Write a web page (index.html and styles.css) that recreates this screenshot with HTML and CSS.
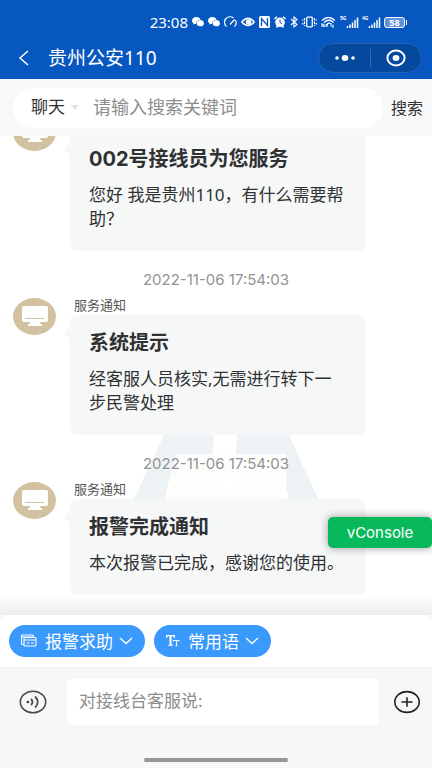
FILE: index.html
```html
<!DOCTYPE html>
<html lang="zh-CN">
<head>
<meta charset="utf-8">
<meta name="viewport" content="width=device-width, initial-scale=1">
<title>贵州公安110</title>
<link rel="stylesheet" href="styles.css">
</head>
<body>
<svg class="defs" aria-hidden="true">
  <symbol id="wechat" viewBox="0 0 12 10">
    <path fill="#fff" d="M4.3 0C1.9 0 0 1.6 0 3.500c0 1.100.6 2 1.500 2.700L1.200 7.400l1.500-.7c.4.1.9.2 1.400.2C3.900 4.400 5.800 2.700 8.500 2.700 8.100 1.100 6.400 0 4.300 0z"/>
    <path fill="#fff" d="M8.300 3.100c-2.100 0-3.700 1.400-3.700 3.100s1.600 3.100 3.700 3.100c.4 0 .8 0 1.200-.2l1.300.7-.3-1.200c.9-.5 1.500-1.400 1.500-2.400 0-1.700-1.600-3.100-3.700-3.100z"/>
  </symbol>
  <symbol id="monitor" viewBox="0 0 26 22">
    <path fill="#fff" d="M2 0h22q2 0 2 2v12q0 2-2 2h-6q0 2 2 2.500V20H6v-1.500q2-.5 2-2.500H2q-2 0-2-2V2q0-2 2-2z"/>
    <path d="M3 12.500h19" stroke="#d2c2a1"/>
  </symbol>
  <symbol id="chevron" viewBox="0 0 14 8">
    <path d="M1 1l6 5.500L13 1" fill="none" stroke="#fff" stroke-width="1.400"/>
  </symbol>
  <symbol id="bars" viewBox="0 0 19 12">
    <path d="M7.500 12v-2M10 12V8.500M12.500 12V6.500M15 12V4M17.500 12V1.500" stroke="#fff" stroke-width="1.500"/>
  </symbol>
</svg>
<div class="app">
  <header class="top">
    <div class="status">
      <span class="clock">23:08</span>
      <svg class="w12" viewBox="0 0 12 10"><use href="#wechat"/></svg>
      <svg class="w12" viewBox="0 0 12 10"><use href="#wechat"/></svg>
      <svg class="w13" viewBox="0 0 13 12"><path d="M2.500 10.500A5.300 5.300 0 0 1 9.500 2M11.300 4a5.300 5.300 0 0 1-.8 6.500M6 8.500l4.500-5" fill="none" stroke="#fff" stroke-width="1.200"/></svg>
      <svg class="w14" viewBox="0 0 14 12"><path d="M.7 6Q7-1.500 13.300 6 7 13 .7 6z" fill="none" stroke="#fff" stroke-width="1.400"/><circle cx="7.500" cy="6" r="2.800" fill="#fff"/></svg>
      <svg class="w11" viewBox="0 0 11 12"><rect width="11" height="12" rx="1.500" fill="#fff"/><path d="M2.500 10V2.500L8.500 9.500V2" fill="none" stroke="#0757c1" stroke-width="1.300"/></svg>
      <svg class="w12" viewBox="0 0 12 12"><circle cx="6" cy="6.300" r="4.800" fill="#fff"/><path d="M.5 3L3 .8M11.500 3L9 .8M2.500 11.500l1-1.500M9.500 11.500l-1-1.500" stroke="#fff" stroke-width="1.500"/><path d="M6 3.500v3l2 1.200" fill="none" stroke="#0757c1"/></svg>
      <svg class="w8" viewBox="0 0 8 12"><path d="M1 3l6 5.500L4 11V1l3 2.500L1 9" fill="none" stroke="#fff" stroke-width="1.100"/></svg>
      <svg class="w15" viewBox="0 0 15 12"><rect x="4.700" y="1.200" width="5.600" height="9.600" rx=".8" fill="none" stroke="#fff" stroke-width="1.300"/><path d="M2.500 2v2.500m0 1v2.500m0 1v1M.7 3.500v1m0 2.500v1.500M12.500 2v2.500m0 1v2.500m0 1v1M14.300 3.500v1m0 2.500v1.500" stroke="#fff" stroke-width="1.200"/></svg>
      <svg class="w15" viewBox="0 0 15 12"><path d="M1 4.500Q7.500-1.500 14 4.500M3 6.500q5-4.500 9.500 0M6 8q2.500-2 4.500.5" fill="none" stroke="#fff" stroke-width="1.300"/><path d="M1 11V7.500l2 3.500V7.500M5 11V8.500h2M5 10h2M9.500 9l2.500 2.500M12 8.500v3" fill="none" stroke="#fff"/></svg>
      <span class="signal"><small>5G</small><svg viewBox="0 0 19 12"><use href="#bars"/></svg></span>
      <span class="signal"><small>4G</small><svg viewBox="0 0 19 12"><use href="#bars"/></svg></span>
      <span class="battery">58</span>
    </div>
    <nav class="nav">
      <button class="plain back" aria-label="返回"><svg width="12" height="16" viewBox="0 0 12 16"><path d="M10 1L2 8l8 7" fill="none" stroke="#fff" stroke-width="1.500"/></svg></button>
      <h1>贵州公安110</h1>
      <div class="capsule">
        <button class="plain" aria-label="更多"><svg width="22" height="8" viewBox="0 0 22 8"><g fill="#fff"><circle cx="3" cy="4" r="1.800"/><ellipse cx="11" cy="4" rx="3.300" ry="2.900"/><circle cx="19" cy="4" r="1.800"/></g></svg></button>
        <button class="plain" aria-label="关闭"><svg width="20" height="18" viewBox="0 0 20 18"><ellipse cx="10" cy="9" rx="8.600" ry="7.400" fill="none" stroke="#fff" stroke-width="2"/><ellipse cx="10" cy="9" rx="3.400" ry="3" fill="#fff"/></svg></button>
      </div>
    </nav>
  </header>

  <form class="search">
    <div class="pill">
      <select aria-label="搜索类型"><option>聊天</option></select>
      <svg width="8" height="5" viewBox="0 0 8 5"><path d="M0 0h8L4 5z" fill="#e2e2e2"/></svg>
      <input type="text" aria-label="搜索关键词" placeholder="请输入搜索关键词">
    </div>
    <button class="plain" type="button">搜索</button>
  </form>

  <main class="chat">
    <svg class="emblem" viewBox="0 0 184 64" aria-hidden="true">
      <path d="M42 19h106v45H32z" fill="#fdfdfb"/>
      <path d="M30 0h50l-1 19H42L32 58l-1 6H0zM103 0h52l29 64h-29l-3-10V19h-50z" fill="#edf3f4"/>
      <circle cx="92" cy="51" r="9" fill="#fff"/>
    </svg>
    <article class="message">
      <div class="avatar"><svg width="26" height="22"><use href="#monitor"/></svg></div>
      <div class="content">
        <div class="name"></div>
        <section class="card"><h2>002号接线员为您服务</h2><p>您好 我是贵州110，有什么需要帮助？</p></section>
      </div>
    </article>
    <time>2022-11-06 17:54:03</time>
    <article class="message">
      <div class="avatar"><svg width="26" height="22"><use href="#monitor"/></svg></div>
      <div class="content">
        <div class="name">服务通知</div>
        <section class="card"><h2>系统提示</h2><p>经客服人员核实,无需进行转下一步民警处理</p></section>
      </div>
    </article>
    <time>2022-11-06 17:54:03</time>
    <article class="message">
      <div class="avatar"><svg width="26" height="22"><use href="#monitor"/></svg></div>
      <div class="content">
        <div class="name">服务通知</div>
        <section class="card"><h2>报警完成通知</h2><p>本次报警已完成，感谢您的使用。</p></section>
      </div>
    </article>
    <button class="console">vConsole</button>
  </main>

  <div class="tools">
    <button class="chip"><svg width="16" height="14" viewBox="0 0 16 14"><g fill="none" stroke="#fff" stroke-width="1.100"><path d="M3 10.500H1.500q-1 0-1-1V2q0-1 1-1h10q1 0 1 1v1"/><rect x="3" y="3.500" width="12" height="8.500" rx="1"/><path d="M3 6h12M5.500 9h3M10 9h3M1 3h11"/></g></svg><span>报警求助</span><svg width="14" height="8"><use href="#chevron"/></svg></button>
    <button class="chip"><svg width="14" height="12" viewBox="0 0 14 12"><path d="M0 0h9v3H8L7.500 1.300H5.600v8.200l1.400.4v.9H2.200v-.9l1.300-.4V1.300H1.500L1 3H0z" fill="#fff"/><path d="M7.500 5.500h5.500M10.500 5.500V11M7.500 5v1.500M13 5v1.500M9.500 10.700h2" stroke="#fff" fill="none"/></svg><span>常用语</span><svg width="14" height="8"><use href="#chevron"/></svg></button>
  </div>

  <footer class="composer">
    <div class="entry">
      <button class="plain" aria-label="语音"><svg width="28" height="24" viewBox="0 0 28 24"><g fill="none" stroke="#4b4b4b" stroke-width="1.600"><ellipse cx="14" cy="12" rx="12.700" ry="10.800"/><path d="M12 9q3 3 0 6M16 6.500q5.500 5.500 0 11" stroke-width="1.800"/></g><ellipse cx="8.800" cy="12" rx="1.500" ry="1.300" fill="#4b4b4b"/></svg></button>
      <input type="text" aria-label="消息" placeholder="对接线台客服说:">
      <button class="plain" aria-label="添加"><svg width="28" height="24" viewBox="0 0 28 24"><g fill="none" stroke="#222" stroke-width="1.600"><ellipse cx="14" cy="12" rx="12.200" ry="10.400"/><path d="M8.500 12h11M14 7.200v9.600"/></g></svg></button>
    </div>
    <div class="home"></div>
  </footer>
</div>
</body>
</html>
```
FILE: styles.css
```css
* { box-sizing: border-box; }

body {
  margin: 0;
  background: #fff;
  color: #303133;
  font-family: "Noto Sans", "Noto Sans CJK SC", sans-serif;
  font-size: 17px;
}

button, input, select { font: inherit; color: inherit; border: 0; outline: 0; }
h1, h2, p { margin: 0; }
svg { display: block; flex: none; }
.defs { position: absolute; width: 0; height: 0; }

.plain {
  display: flex;
  align-items: center;
  justify-content: center;
  padding: 0;
  background: none;
}

.app { display: flex; flex-direction: column; height: 100vh; }

.top { background: #0757c1; color: #fff; }

.status {
  display: flex;
  align-items: center;
  justify-content: flex-end;
  gap: 4px;
  height: 36px;
  padding: 8px 27px 0 0;
}
.status svg { height: 12px; }
.clock { font-size: 15px; line-height: 20px; }
.w8 { width: 8px; }
.w11 { width: 11px; }
.w12 { width: 12px; }
.w13 { width: 13px; }
.w14 { width: 14px; }
.w15 { width: 15px; }
.signal { position: relative; width: 18px; }
.signal svg { width: 19px; }
.signal small {
  position: absolute;
  left: 0;
  top: -1px;
  font-size: 5px;
  font-weight: 700;
  line-height: 6px;
}
.battery {
  position: relative;
  width: 21px;
  height: 11px;
  border: 1px solid #fff;
  border-radius: 3px;
  background: #5e93da;
  font-size: 9px;
  font-weight: 700;
  line-height: 9px;
  text-align: center;
}
.battery::after {
  content: "";
  position: absolute;
  left: 21px;
  top: 2px;
  width: 1px;
  height: 5px;
  background: #fff;
}

.nav {
  display: flex;
  align-items: center;
  height: 43px;
  padding: 0 10px 0 16px;
}
.back { width: 16px; margin-right: 16px; }
.nav h1 { flex: 1; font-size: 19px; font-weight: 400; line-height: 28px; }
.capsule {
  display: flex;
  width: 104px;
  height: 30px;
  border: 1px solid #2563b8;
  border-radius: 15px;
  background: #04499d;
}
.capsule button { flex: 1; }
.capsule button + button { position: relative; }
.capsule button + button::before {
  content: "";
  position: absolute;
  left: 0;
  top: 5px;
  height: 18px;
  border-left: 1px solid #3769ad;
}

.search {
  display: flex;
  align-items: center;
  gap: 8px;
  height: 57px;
  padding: 0 9px 0 13px;
  background: #f8f8f9;
}
.search > button { font-size: 16px; }
.pill {
  display: flex;
  flex: 1;
  align-items: center;
  height: 40px;
  min-width: 0;
  padding: 0 18px;
  border-radius: 20px;
  background: #fff;
}
.pill select { appearance: none; width: 40px; padding: 0; background: none; }
.pill input { flex: 1; min-width: 0; padding: 0; margin-left: 14px; background: none; font-size: 18px; }
.pill select, .pill input, .search > button { padding-bottom: 2px; }
input::placeholder { color: #8d8d8f; opacity: 1; }

.chat {
  position: relative;
  display: flex;
  flex: 1;
  flex-direction: column;
  justify-content: flex-end;
  min-height: 0;
  padding: 0 66px 20px 13px;
  overflow: hidden;
  background: linear-gradient(to top, #ececec, #fff 20px);
}
.emblem { position: absolute; left: 50%; bottom: 116px; width: 184px; margin-left: -82px; }
.chat time {
  position: relative;
  align-self: center;
  margin: 19px 0 8px 53px;
  color: #929294;
  font-family: Inter, sans-serif;
  font-size: 15px;
  line-height: 20px;
}
.message { position: relative; display: flex; gap: 14px; }
.avatar {
  display: flex;
  flex: none;
  align-items: center;
  justify-content: center;
  width: 43px;
  height: 37px;
  border-radius: 50%;
  background: #d2c2a1;
}
.content { flex: 1; min-width: 0; }
.name { padding-left: 4px; color: #555; font-size: 13px; line-height: 14px; height: 17px; }
.card {
  position: relative;
  padding: 14px 18px 20px 19px;
  border-radius: 8px;
  background: #f6f8f8;
}
.card::before {
  content: "";
  position: absolute;
  left: -6px;
  top: 12px;
  border: solid transparent;
  border-width: 6px 6px 6px 0;
  border-right-color: #f6f8f8;
}
.card h2 {
  font-family: Inter, "Noto Sans CJK SC", sans-serif;
  font-size: 20px;
  font-weight: 700;
  line-height: 28px;
}
.card p { margin-top: 10px; line-height: 24px; }

.console {
  position: absolute;
  right: 0;
  bottom: 67px;
  width: 104px;
  height: 31px;
  padding: 0;
  border-radius: 5px;
  background: #07b95b;
  box-shadow: 0 0 8px rgba(0, 0, 0, .4);
  color: #fff;
  font-family: Inter, sans-serif;
  font-size: 15px;
}

.tools {
  display: flex;
  gap: 9px;
  padding: 10px 9px;
  background: #fff;
  border-radius: 8px 8px 0 0;
  box-shadow: 0 0 4px #e4e4e4;
}
.chip {
  display: flex;
  align-items: center;
  height: 32px;
  padding: 0 12px;
  border-radius: 16px;
  background: #3999fc;
  color: #fff;
}
.chip span { margin: 0 6px 0 8px; padding-bottom: 2px; }

.composer {
  position: relative;
  height: 101px;
  padding: 11px 11px 6px 19px;
  display: flex;
  flex-direction: column;
  justify-content: space-between;
  border-top: 1px solid #eee;
  background: #f7f7f8;
}
.entry { display: flex; align-items: center; }
.entry input {
  flex: 1;
  min-width: 0;
  height: 46px;
  margin: 0 14px 0 20px;
  padding: 0 12px 3px;
  border-radius: 4px;
  background: #fff;
}
.home { align-self: center; width: 144px; height: 4px; margin-right: 8px; border-radius: 2px; background: #969696; }
```
